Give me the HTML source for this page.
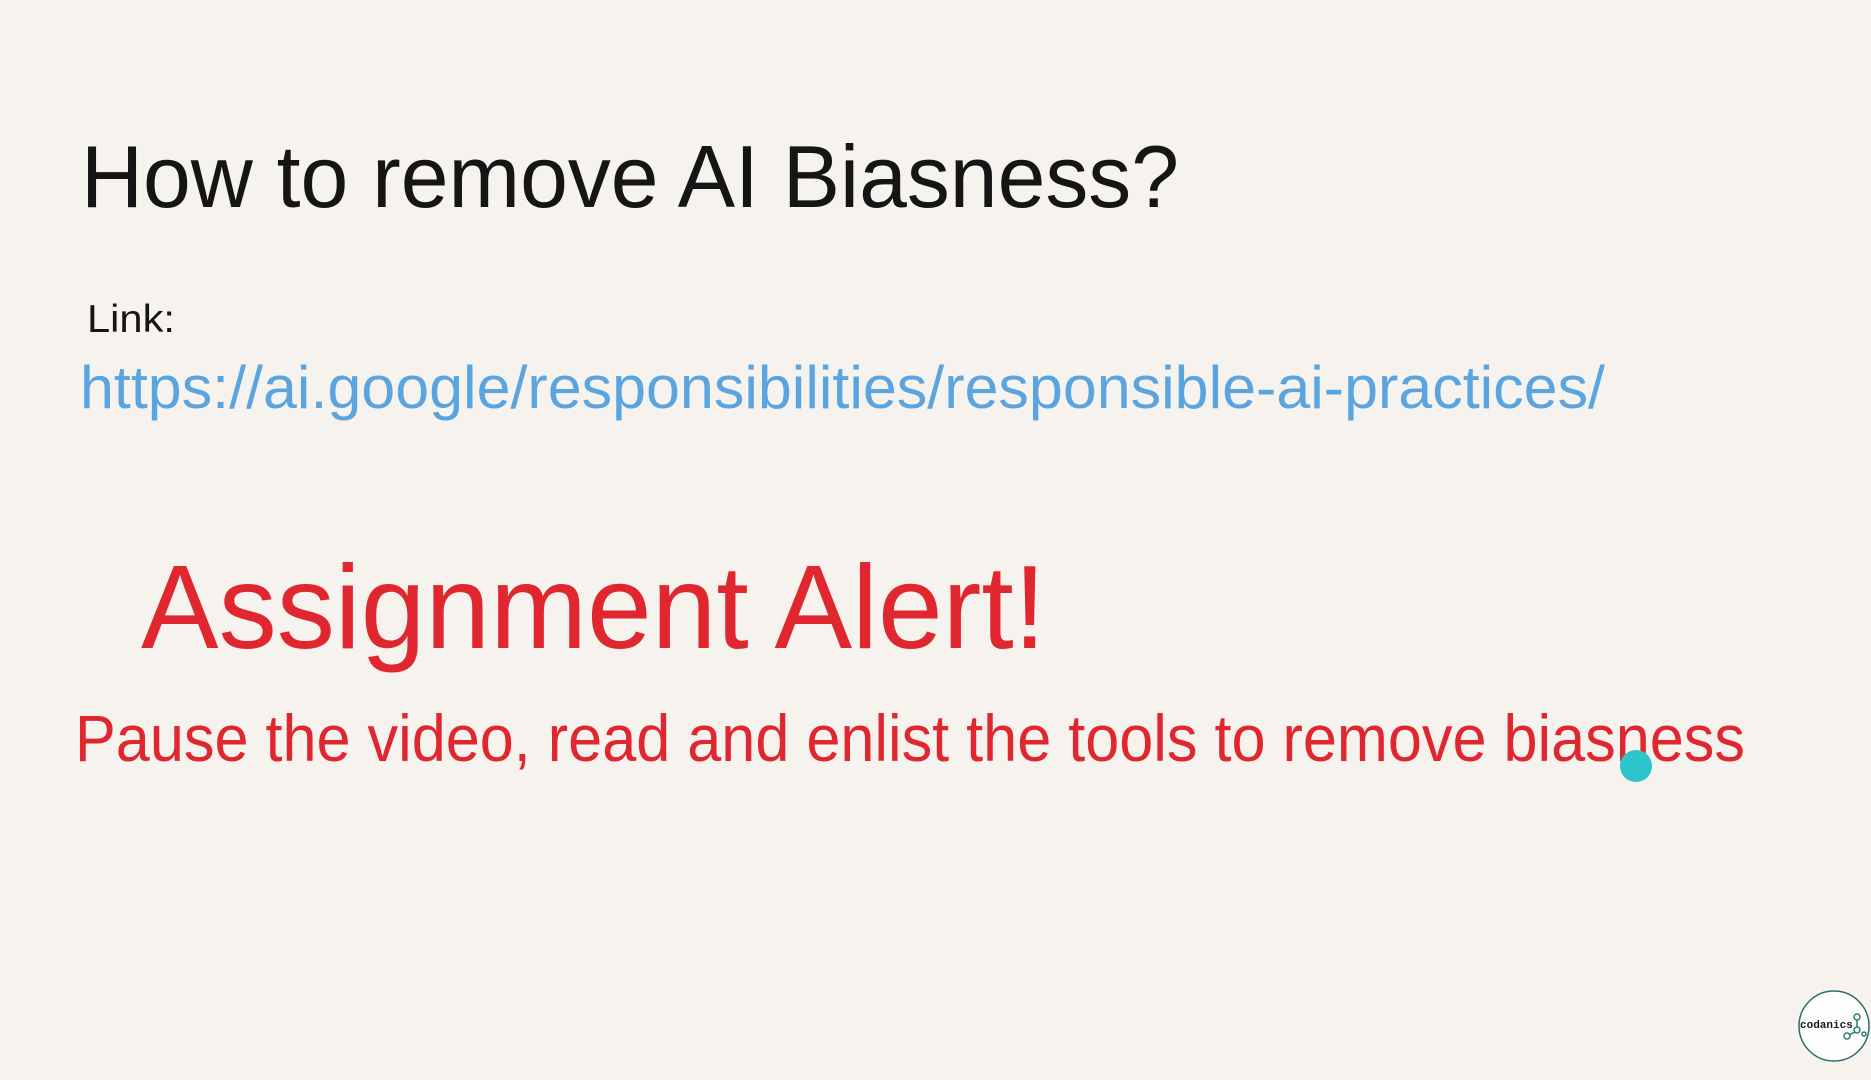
<!DOCTYPE html>
<html><head><meta charset="utf-8"><style>
html,body{margin:0;padding:0;background:#f6f3ef;}
svg{display:block}
</style></head><body>
<svg width="1871" height="1080" viewBox="0 0 1871 1080" xmlns="http://www.w3.org/2000/svg">
<rect width="1871" height="1080" fill="#f6f3ef"/>
<g font-family="Liberation Sans, sans-serif">
<text x="81" y="207" font-size="88" fill="#151515" textLength="1098" lengthAdjust="spacingAndGlyphs">How to remove AI Biasness?</text>
<text x="87" y="332" font-size="39" fill="#151515" textLength="88" lengthAdjust="spacingAndGlyphs">Link:</text>
<text x="80" y="408" font-size="60" fill="#5aa5e0" textLength="1525" lengthAdjust="spacingAndGlyphs">https://ai.google/responsibilities/responsible-ai-practices/</text>
<text x="141" y="648" font-size="119" fill="#e0262e" textLength="905" lengthAdjust="spacingAndGlyphs">Assignment Alert!</text>
<text x="75" y="761" font-size="66" fill="#e0262e" textLength="1670" lengthAdjust="spacingAndGlyphs">Pause the video, read and enlist the tools to remove biasness</text>
</g>
<circle cx="1636" cy="766" r="16" fill="#2cc5cc"/>
<circle cx="1834" cy="1026" r="35" fill="#fdfdfb" stroke="#2a6e6c" stroke-width="1.5"/>
<text x="1800" y="1028" font-family="Liberation Mono, monospace" font-size="11" font-weight="bold" fill="#1a1a1a">codanics</text>
<g stroke="#2a7a78" stroke-width="1.5" fill="none">
<circle cx="1857" cy="1017" r="3"/>
<circle cx="1857" cy="1030" r="3"/>
<circle cx="1847" cy="1036" r="3"/>
<circle cx="1864" cy="1034" r="2"/>
<line x1="1857" y1="1020" x2="1857" y2="1027"/>
<line x1="1855" y1="1032" x2="1849" y2="1035"/>
</g>
</svg>
</body></html>
